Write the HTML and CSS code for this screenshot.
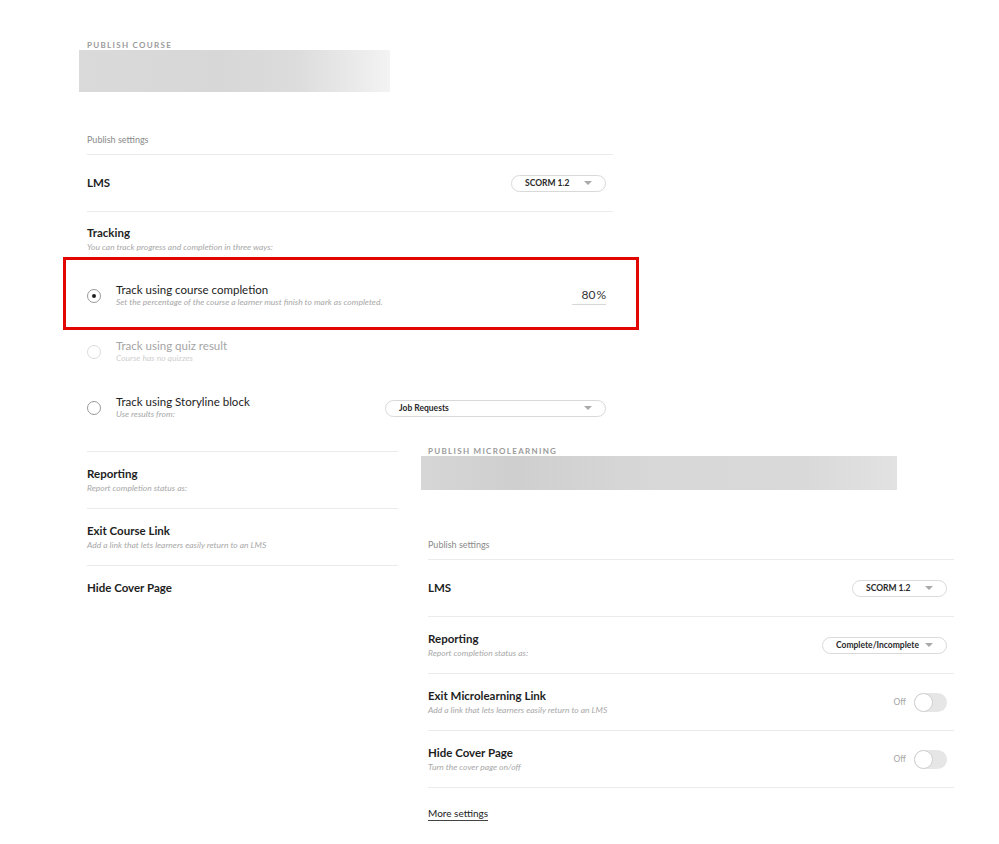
FILE: index.html
```html
<!DOCTYPE html>
<html>
<head>
<title>Publish Settings</title>
<link rel="stylesheet" href="styles.css">
</head>
<body>
<div class="canvas">

<section class="panel course">
<div class="eyebrow">PUBLISH COURSE</div>
<div class="banner"></div>
<div class="settings">
<div class="group-label">Publish settings</div>

<div class="row row-center">
<div class="row-text"><div class="row-title">LMS</div></div>
<div class="select select-scorm"><span>SCORM 1.2</span><i class="caret"></i></div>
</div>

<div class="row tracking">
<div class="row-title">Tracking</div>
<div class="row-sub">You can track progress and completion in three ways:</div>
<div class="options">
<div class="option highlighted">
<span class="radio checked"></span>
<div class="option-text">
<div class="option-title">Track using course completion</div>
<div class="option-sub">Set the percentage of the course a learner must finish to mark as completed.</div>
</div>
<div class="percent">80<span>%</span></div>
</div>
<div class="option disabled">
<span class="radio"></span>
<div class="option-text">
<div class="option-title">Track using quiz result</div>
<div class="option-sub">Course has no quizzes</div>
</div>
</div>
<div class="option">
<span class="radio"></span>
<div class="option-text">
<div class="option-title">Track using Storyline block</div>
<div class="option-sub">Use results from:</div>
</div>
<div class="select select-block"><span>Job Requests</span><i class="caret"></i></div>
</div>
</div>
</div>

<div class="row">
<div class="row-text">
<div class="row-title">Reporting</div>
<div class="row-sub">Report completion status as:</div>
</div>
</div>

<div class="row">
<div class="row-text">
<div class="row-title">Exit Course Link</div>
<div class="row-sub">Add a link that lets learners easily return to an LMS</div>
</div>
</div>

<div class="row">
<div class="row-text">
<div class="row-title">Hide Cover Page</div>
</div>
</div>
</div>
</section>

<section class="panel micro">
<div class="eyebrow">PUBLISH MICROLEARNING</div>
<div class="banner"></div>
<div class="settings">
<div class="group-label">Publish settings</div>

<div class="row row-center">
<div class="row-text"><div class="row-title">LMS</div></div>
<div class="select select-scorm"><span>SCORM 1.2</span><i class="caret"></i></div>
</div>

<div class="row">
<div class="row-text">
<div class="row-title">Reporting</div>
<div class="row-sub">Report completion status as:</div>
</div>
<div class="select select-report"><span>Complete/Incomplete</span><i class="caret"></i></div>
</div>

<div class="row">
<div class="row-text">
<div class="row-title">Exit Microlearning Link</div>
<div class="row-sub">Add a link that lets learners easily return to an LMS</div>
</div>
<div class="switch"><span class="switch-label">Off</span><span class="toggle"><span class="knob"></span></span></div>
</div>

<div class="row">
<div class="row-text">
<div class="row-title">Hide Cover Page</div>
<div class="row-sub">Turn the cover page on/off</div>
</div>
<div class="switch"><span class="switch-label">Off</span><span class="toggle"><span class="knob"></span></span></div>
</div>

<div class="more">
<a class="more-link">More settings</a>
</div>
</div>
</section>

</div>
</body>
</html>
```

FILE: styles.css
```css
body {
  font-family: Lato, "Open Sans", Arial, sans-serif;
  margin: 0;
  background-color: #fff;
  color: #222;
}

.canvas {
  position: relative;
  width: 999px;
  height: 844px;
  overflow: hidden;
}

/* Panels */
.panel {
  background-color: #fff;
}

.course {
  width: 534px;
  margin-left: 79px;
  padding-top: 40px;
}

.micro {
  position: absolute;
  left: 398px;
  top: 436px;
  width: 533px;
  padding: 10px 0 20px 23px;
}

.eyebrow {
  margin-left: 8px;
  font-size: 8px;
  line-height: 10px;
  font-weight: 700;
  letter-spacing: 1.3px;
  color: #9a9a9a;
}

.micro .eyebrow {
  margin-left: 7px;
}

.banner {
  width: 311px;
  height: 42px;
  background: linear-gradient(90deg, #dadada 0%, #d7d7d7 45%, #dcdcdc 70%, #f3f3f3 100%);
}

.micro .banner {
  width: 476px;
  height: 34px;
  background: linear-gradient(90deg, #d6d6d6 0%, #cfcfcf 20%, #d8d8d8 50%, #d9d9d9 80%, #e2e2e2 100%);
}

.settings {
  margin-left: 8px;
}

.micro .settings {
  margin-left: 7px;
}

.group-label {
  margin-top: 42px;
  padding-bottom: 8px;
  font-size: 9px;
  line-height: 12px;
  color: #8a8a8a;
}

.micro .group-label {
  margin-top: 49px;
}

/* Rows */
.row {
  display: flex;
  justify-content: space-between;
  align-items: center;
  min-height: 56px;
  padding-right: 7px;
  border-top: 1px solid #ebebeb;
}

.row-text {
  align-self: flex-start;
  padding-top: 15px;
}

.row-center .row-text {
  align-self: center;
  padding-top: 0;
}

.row-title {
  font-size: 11.5px;
  line-height: 14px;
  font-weight: 700;
  color: #1e1e1e;
}

.row-sub {
  margin-top: 1px;
  font-size: 8.5px;
  line-height: 12px;
  font-style: italic;
  color: #a8a8a8;
}

/* Tracking options */
.tracking {
  display: block;
  padding-top: 14px;
  padding-bottom: 15px;
}

.options {
  margin-top: 15px;
}

.option {
  position: relative;
  display: flex;
  align-items: center;
  height: 56px;
}

.option.highlighted::after {
  content: "";
  position: absolute;
  left: -24px;
  right: -33px;
  top: -11px;
  bottom: -6px;
  border: 3px solid #e10600;
}

.radio {
  width: 14px;
  height: 14px;
  box-sizing: border-box;
  margin-right: 15px;
  border: 1px solid #9a9a9a;
  border-radius: 50%;
  display: flex;
  align-items: center;
  justify-content: center;
}

.radio.checked::before {
  content: "";
  width: 4px;
  height: 4px;
  border-radius: 50%;
  background-color: #222;
}

.option-text {
  align-self: flex-start;
  padding-top: 15px;
}

.option-title {
  font-size: 11.5px;
  line-height: 14px;
  color: #222;
}

.option-sub {
  font-size: 8.5px;
  line-height: 11px;
  font-style: italic;
  color: #a8a8a8;
}

.option.disabled .radio {
  border-color: #dcdcdc;
}

.option.disabled .option-title {
  color: #a5a5a5;
}

.option.disabled .option-sub {
  color: #cfcfcf;
}

.percent {
  margin-left: auto;
  width: 34px;
  padding-bottom: 2px;
  border-bottom: 1px solid #d8d8d8;
  text-align: right;
  font-size: 12px;
  line-height: 14px;
  color: #333;
}

.percent span {
  margin-left: 1px;
}

/* Selects */
.select {
  display: flex;
  justify-content: space-between;
  align-items: center;
  box-sizing: border-box;
  height: 17px;
  padding: 0 13px 0 13px;
  border: 1px solid #d9d9d9;
  border-radius: 9px;
  font-size: 8.5px;
  font-weight: 700;
  color: #2a2a2a;
}

.select-scorm {
  width: 95px;
}

.select-report {
  width: 125px;
}

.select-block {
  margin-left: auto;
  width: 221px;
}

.caret {
  width: 0;
  height: 0;
  border-left: 4px solid transparent;
  border-right: 4px solid transparent;
  border-top: 4px solid #a9a9a9;
}

/* Switches */
.switch {
  display: flex;
  align-items: center;
}

.switch-label {
  margin-right: 8px;
  font-size: 8.5px;
  color: #a5a5a5;
}

.toggle {
  display: flex;
  width: 33px;
  height: 19px;
  border-radius: 10px;
  background-color: #e6e6e6;
}

.knob {
  width: 19px;
  height: 19px;
  box-sizing: border-box;
  border: 1px solid #cfcfcf;
  border-radius: 50%;
  background-color: #fff;
}

/* More settings */
.more {
  border-top: 1px solid #ebebeb;
  padding-top: 13px;
}

.more-link {
  display: inline-block;
  padding-bottom: 1px;
  border-bottom: 1.5px solid #444;
  font-size: 10px;
  line-height: 12px;
  color: #222;
}
```
